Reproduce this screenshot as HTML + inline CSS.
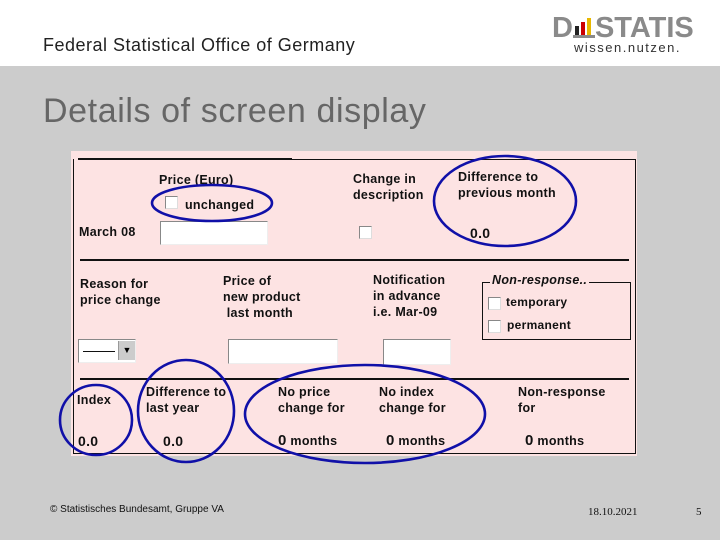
<!DOCTYPE html>
<html><head><style>
body{margin:0;width:720px;height:540px;position:relative;background:#cccccc;font-family:"Liberation Sans",sans-serif;overflow:hidden}
.a{position:absolute;white-space:nowrap}
.f{font-size:12.5px;font-weight:bold;color:#111;line-height:16px;letter-spacing:0.3px}
.cb{position:absolute;width:11px;height:11px;background:#fff;border:1px solid #888;border-right-color:#ddd;border-bottom-color:#ddd}
.tb{position:absolute;background:#fff;border:1px solid #888;border-right-color:#eee;border-bottom-color:#eee}
</style></head><body>
<div class="a" style="left:0;top:0;width:720px;height:66px;background:#fff"></div>
<div class="a" style="left:43px;top:35px;font-size:18px;color:#222;letter-spacing:0.5px">Federal Statistical Office of Germany</div>
<div class="a" style="left:552px;top:12px;font-size:29px;font-weight:bold;color:#8a8a8a;letter-spacing:0px">D<span style="display:inline-block;width:22px;height:22px;position:relative;vertical-align:-1px"><span style="position:absolute;left:2px;bottom:0;width:4px;height:12px;background:#222"></span><span style="position:absolute;left:8px;bottom:0;width:4px;height:16px;background:#c00"></span><span style="position:absolute;left:14px;bottom:0;width:4px;height:20px;background:#e8b800"></span><span style="position:absolute;left:0;bottom:0;width:22px;height:3px;background:#8a8a8a"></span></span>STATIS</div>
<div class="a" style="left:574px;top:40px;font-size:13px;color:#333;letter-spacing:1.5px">wissen.nutzen.</div>
<div class="a" style="left:43px;top:92px;font-size:34px;color:#666;letter-spacing:0.6px">Details of screen display</div>

<div class="a" style="left:71px;top:151px;width:566px;height:305px;background:#fde3e3"></div>
<div class="a" style="left:73px;top:159px;width:561px;height:294px;border:1px solid #111;border-top:none"></div>
<div class="a" style="left:78px;top:158px;width:214px;height:2px;background:#111"></div>
<div class="a" style="left:292px;top:159px;width:343px;height:1px;background:#111"></div>
<div class="a" style="left:80px;top:259px;width:549px;height:2px;background:#111"></div>
<div class="a" style="left:80px;top:378px;width:549px;height:2px;background:#111"></div>

<div class="a f" style="left:159px;top:172px">Price (Euro)</div>
<div class="cb" style="left:165px;top:196px"></div>
<div class="a f" style="left:185px;top:197px">unchanged</div>
<div class="a f" style="left:79px;top:224px">March 08</div>
<div class="tb" style="left:160px;top:221px;width:106px;height:22px"></div>
<div class="a f" style="left:353px;top:171px">Change in<br>description</div>
<div class="cb" style="left:359px;top:226px"></div>
<div class="a f" style="left:458px;top:169px">Difference to<br>previous month</div>
<div class="a f" style="left:470px;top:225px;font-size:14px">0.0</div>

<div class="a f" style="left:80px;top:276px">Reason for<br>price change</div>
<div class="a f" style="left:223px;top:273px">Price of<br>new product<br>&nbsp;last month</div>
<div class="a f" style="left:373px;top:272px">Notification<br>in advance<br>i.e. Mar-09</div>
<div class="a" style="left:482px;top:282px;width:147px;height:56px;border:1px solid #111"></div>
<div class="a f" style="left:490px;top:272px;font-style:italic;background:#fde3e3;padding:0 2px">Non-response..</div>
<div class="cb" style="left:488px;top:297px"></div>
<div class="a f" style="left:506px;top:294px;font-size:12px">temporary</div>
<div class="cb" style="left:488px;top:320px"></div>
<div class="a f" style="left:507px;top:317px;font-size:12px">permanent</div>

<div class="tb" style="left:78px;top:339px;width:56px;height:22px"></div>
<div class="a" style="left:83px;top:351px;width:32px;height:1px;background:#111"></div>
<div class="a" style="left:118px;top:341px;width:16px;height:19px;background:#ccc;border-left:1px solid #999;font-size:9px;text-align:center;line-height:19px">▼</div>
<div class="tb" style="left:228px;top:339px;width:108px;height:23px"></div>
<div class="tb" style="left:383px;top:339px;width:66px;height:24px"></div>

<div class="a f" style="left:77px;top:392px">Index</div>
<div class="a f" style="left:146px;top:384px">Difference to<br>last year</div>
<div class="a f" style="left:278px;top:384px">No price<br>change for</div>
<div class="a f" style="left:379px;top:384px">No index<br>change for</div>
<div class="a f" style="left:518px;top:384px">Non-response<br>for</div>
<div class="a f" style="left:78px;top:433px;font-size:14px">0.0</div>
<div class="a f" style="left:163px;top:433px;font-size:14px">0.0</div>
<div class="a f" style="left:278px;top:433px"><span style="font-size:15px">0</span> months</div>
<div class="a f" style="left:386px;top:433px"><span style="font-size:15px">0</span> months</div>
<div class="a f" style="left:525px;top:433px"><span style="font-size:15px">0</span> months</div>

<svg class="a" style="left:0;top:0" width="720" height="540">
<g fill="none" stroke="#1010a8" stroke-width="2.6">
<ellipse cx="212" cy="203" rx="60" ry="18"/>
<ellipse cx="505" cy="201" rx="71" ry="45"/>
<ellipse cx="96" cy="420" rx="36" ry="35"/>
<ellipse cx="186" cy="411" rx="48" ry="51"/>
<ellipse cx="365" cy="414" rx="120" ry="49"/>
</g></svg>

<div class="a" style="left:50px;top:504px;font-size:10px;color:#111">© Statistisches Bundesamt, Gruppe VA</div>
<div class="a" style="left:588px;top:506px;font-size:11px;font-family:'Liberation Serif',serif;color:#111">18.10.2021</div>
<div class="a" style="left:696px;top:506px;font-size:11px;font-family:'Liberation Serif',serif;color:#111">5</div>
</body></html>
